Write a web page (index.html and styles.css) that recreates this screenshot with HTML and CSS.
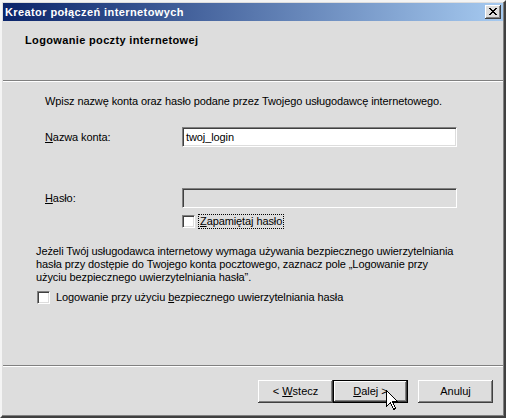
FILE: index.html
```html
<!DOCTYPE html>
<html lang="pl">
<head>
<meta charset="utf-8">
<title>Kreator połączeń internetowych</title>
<link rel="stylesheet" href="styles.css">
</head>
<body>
<div class="window">
  <div class="titlebar">
    <span class="title">Kreator połączeń internetowych</span>
    <span class="close-btn"><svg width="8" height="7" viewBox="0 0 8 7"><path d="M0 0h2v1h1v1h2V1h1V0h2v1H7v1H6v1H5v1h1v1h1v1h1v1H6V6H5V5H3v1H2v1H0V6h1V5h1V4h1V3H2V2H1V1H0z" fill="#000"/></svg></span>
  </div>
  <div class="header">
    <div class="header-title">Logowanie poczty internetowej</div>
  </div>
  <div class="etched"></div>
  <div class="content">
    <p class="intro">Wpisz nazwę konta oraz hasło podane przez Twojego usługodawcę internetowego.</p>
    <div class="field-row first">
      <span class="label"><u>N</u>azwa konta:</span>
      <div class="textbox">twoj_login</div>
    </div>
    <div class="field-row second">
      <span class="label"><u>H</u>asło:</span>
      <div class="textbox disabled"></div>
    </div>
    <div class="check-row remember">
      <span class="checkbox"></span>
      <span class="check-label focused"><u>Z</u>apamiętaj hasło</span>
    </div>
    <p class="note">Jeżeli Twój usługodawca internetowy wymaga używania bezpiecznego uwierzytelniania<br>hasła przy dostępie do Twojego konta pocztowego, zaznacz pole „Logowanie przy<br>użyciu bezpiecznego uwierzytelniania hasła”.</p>
    <div class="check-row spa">
      <span class="checkbox"></span>
      <span class="check-label">Logowanie przy użyciu <u>b</u>ezpiecznego uwierzytelniania hasła</span>
    </div>
  </div>
  <div class="etched"></div>
  <div class="buttons">
    <div class="btn"><span>&lt; <u>W</u>stecz</span></div>
    <div class="btn default"><span><u>D</u>alej &gt;</span></div>
    <div class="btn cancel"><span>Anuluj</span></div>
    <svg class="cursor" width="13" height="21" viewBox="0 0 13 21"><path d="M0.5 0.5 L0.5 16.5 L4.5 12.5 L7.5 19.5 L9.5 18.5 L6.5 11.5 L11.5 11.5 Z" fill="#fff" stroke="#000" stroke-width="1" shape-rendering="crispEdges"/></svg>
  </div>
</div>
</body>
</html>
```

FILE: styles.css
```css
* { box-sizing: border-box; }
html, body {
  margin: 0;
  padding: 0;
  background: #dddddd;
}
body {
  font-family: "Liberation Sans", Arial, sans-serif;
  font-size: 11px;
  color: #000;
}
.window {
  width: 506px;
  height: 418px;
  background: #dddddd;
  border-top: 2px solid #f4f4f4;
  border-left: 2px solid #f4f4f4;
  border-right: 2px solid #404040;
  border-bottom: 2px solid #404040;
  box-shadow: inset -1px -1px 0 #808080;
  padding: 1px;
  display: flex;
  flex-direction: column;
  position: relative;
}
.titlebar {
  height: 18px;
  background: linear-gradient(to right, #0a246a 0%, #a6caf0 100%);
  display: flex;
  align-items: center;
  justify-content: space-between;
  padding: 0 2px 0 2px;
}
.title {
  color: #fff;
  font-weight: bold;
  font-size: 11px;
  letter-spacing: 0.4px;
}
.close-btn {
  width: 16px;
  height: 14px;
  background: #dddddd;
  box-shadow: inset -1px -1px 0 #404040, inset 1px 1px 0 #fff, inset -2px -2px 0 #808080;
  display: flex;
  align-items: center;
  justify-content: center;
  padding-bottom: 1px;
}
.close-btn svg { display: block; }
.header {
  height: 59px;
  padding: 13px 0 0 22px;
}
.header-title {
  font-weight: bold;
  font-size: 11px;
  line-height: 13px;
  letter-spacing: 0.35px;
}
.etched {
  height: 2px;
  border-top: 1px solid #808080;
  border-bottom: 1px solid #fff;
  flex: none;
}
.content {
  flex: 1;
  padding: 13px 0 0 0;
  letter-spacing: -0.1px;
}
.intro {
  margin: 0 0 0 42px;
  line-height: 13px;
}
.field-row {
  display: flex;
  align-items: center;
  margin-left: 42px;
}
.field-row.first { margin-top: 19px; }
.field-row.second { margin-top: 41px; }
.label {
  width: 137px;
  flex: none;
}
.textbox {
  width: 275px;
  height: 20px;
  background: #fff;
  border-top: 1px solid #808080;
  border-left: 1px solid #808080;
  border-right: 1px solid #fff;
  border-bottom: 1px solid #fff;
  box-shadow: inset 1px 1px 0 #404040, inset -1px -1px 0 #dddddd;
  padding: 3px 0 0 3px;
  line-height: 13px;
}
.textbox.disabled { background: #dddddd; }
.check-row {
  display: flex;
  align-items: center;
  height: 13px;
}
.check-row.remember {
  margin-top: 7px;
  margin-left: 179px;
}
.check-row.spa {
  margin-top: 7px;
  margin-left: 34px;
}
.checkbox {
  width: 13px;
  height: 13px;
  flex: none;
  background: #fff;
  border-top: 1px solid #808080;
  border-left: 1px solid #808080;
  border-right: 1px solid #fff;
  border-bottom: 1px solid #fff;
  box-shadow: inset 1px 1px 0 #404040, inset -1px -1px 0 #dddddd;
}
.check-label {
  margin-left: 6px;
  line-height: 13px;
}
.check-label.focused {
  margin-left: 4px;
  outline: 1px dotted #000;
  padding: 0 1px;
}
.note {
  margin: 17px 0 0 33px;
  line-height: 13px;
}
.buttons {
  height: 48px;
  flex: none;
  display: flex;
  justify-content: flex-end;
  align-items: flex-start;
  padding: 13px 10px 0 0;
  position: relative;
}
.btn {
  width: 75px;
  height: 23px;
  display: flex;
  align-items: center;
  justify-content: center;
  background: #dddddd;
  box-shadow: inset -1px -1px 0 #404040, inset 1px 1px 0 #fff, inset -2px -2px 0 #808080;
  line-height: 13px;
}
.btn.default {
  border: 1px solid #000;
}
.btn.cancel { margin-left: 10px; }
.cursor {
  position: absolute;
  left: 383px;
  top: 23px;
}
```
